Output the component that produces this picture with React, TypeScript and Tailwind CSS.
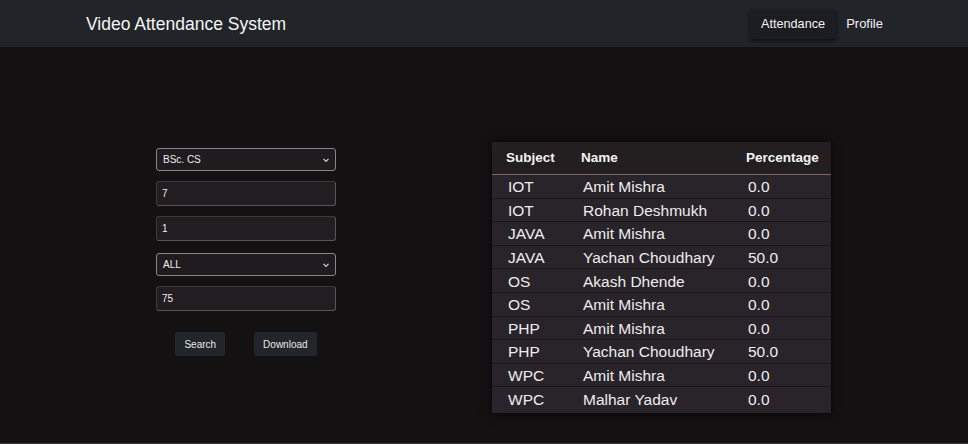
const rows = [
  { subject: "IOT", name: "Amit Mishra", pct: "0.0" },
  { subject: "IOT", name: "Rohan Deshmukh", pct: "0.0" },
  { subject: "JAVA", name: "Amit Mishra", pct: "0.0" },
  { subject: "JAVA", name: "Yachan Choudhary", pct: "50.0" },
  { subject: "OS", name: "Akash Dhende", pct: "0.0" },
  { subject: "OS", name: "Amit Mishra", pct: "0.0" },
  { subject: "PHP", name: "Amit Mishra", pct: "0.0" },
  { subject: "PHP", name: "Yachan Choudhary", pct: "50.0" },
  { subject: "WPC", name: "Amit Mishra", pct: "0.0" },
  { subject: "WPC", name: "Malhar Yadav", pct: "0.0" },
];

function Chevron() {
  return (
    <svg width="8" height="8" viewBox="0 0 8 8" className="text-[#d8d4d6]">
      <path d="M1.5 2.8 L4 5.3 L6.5 2.8" fill="none" stroke="currentColor" strokeWidth="1.2" />
    </svg>
  );
}

function SelectBox({ value }: { value: string }) {
  return (
    <div className="flex h-[23px] items-center justify-between rounded-[3px] border border-[#8b8588] bg-[#201b1e] pl-[6px] pr-[5px] text-[10px] text-[#f0ecee]">
      <span>{value}</span>
      <Chevron />
    </div>
  );
}

function InputBox({ value }: { value: string }) {
  return (
    <div className="flex h-[25px] items-center rounded-[3px] border border-[#3d383b] border-b-[#5a5457] border-r-[#5a5457] bg-[#221d20] pl-[5px] text-[10px] text-[#f0ecee]">
      {value}
    </div>
  );
}

export default function App() {
  return (
    <div
      className="flex h-[444px] w-full flex-col overflow-hidden border-b border-[#3a3a3a] bg-[#131112] text-white"
      style={{ fontFamily: '"Liberation Sans", Arial, sans-serif' }}
    >
      <div className="flex h-[47px] shrink-0 items-center justify-between bg-[#212429] pl-[86px] pr-[85px] pt-[2px]">
        <h1 className="text-[17.5px] font-normal text-[#f4f4f4]">Video Attendance System</h1>
        <div className="flex items-center">
          <button className="h-[29px] bg-[#1b1d21] px-[11px] text-[12.7px] text-[#f2f2f2] shadow-[0_2px_5px_rgba(0,0,0,0.6)]">
            Attendance
          </button>
          <span className="ml-[10px] mb-[2px] text-[13px] text-[#f2f2f2]">Profile</span>
        </div>
      </div>

      <div className="flex items-start pl-[156px] pt-[95px]">
        <div className="mt-[6px] flex w-[180px] flex-col gap-[10px]">
          <SelectBox value="BSc. CS" />
          <InputBox value="7" />
          <InputBox value="1" />
          <div className="mt-[2px]">
            <SelectBox value="ALL" />
          </div>
          <InputBox value="75" />
          <div className="mt-[11px] flex justify-center gap-[29px]">
            <button className="h-[24px] rounded-[2px] bg-[#22252a] px-[9px] text-[10px] text-[#e8e8e8]">
              Search
            </button>
            <button className="h-[24px] rounded-[2px] bg-[#22252a] px-[9px] text-[10px] text-[#e8e8e8]">
              Download
            </button>
          </div>
        </div>

        <div className="ml-[156px] w-[339px] bg-[#29232a] pb-[2px] shadow-[0_0_10px_rgba(0,0,0,0.7)]">
          <div className="flex h-[33px] items-center border-b border-[#7d6468] bg-[#231e20] text-[13.5px] font-bold text-[#f4f4f4]">
            <span className="w-[89px] pl-[14px]">Subject</span>
            <span className="w-[165px]">Name</span>
            <span>Percentage</span>
          </div>
          {rows.map((r, i) => (
            <div
              key={i}
              className="flex h-[23.6px] items-center border-b border-[#1c181a] pt-[1px] text-[15.5px] text-[#ededed] last:border-b-0"
            >
              <span className="w-[91px] pl-[16px]">{r.subject}</span>
              <span className="w-[165px]">{r.name}</span>
              <span>{r.pct}</span>
            </div>
          ))}
        </div>
      </div>
    </div>
  );
}
